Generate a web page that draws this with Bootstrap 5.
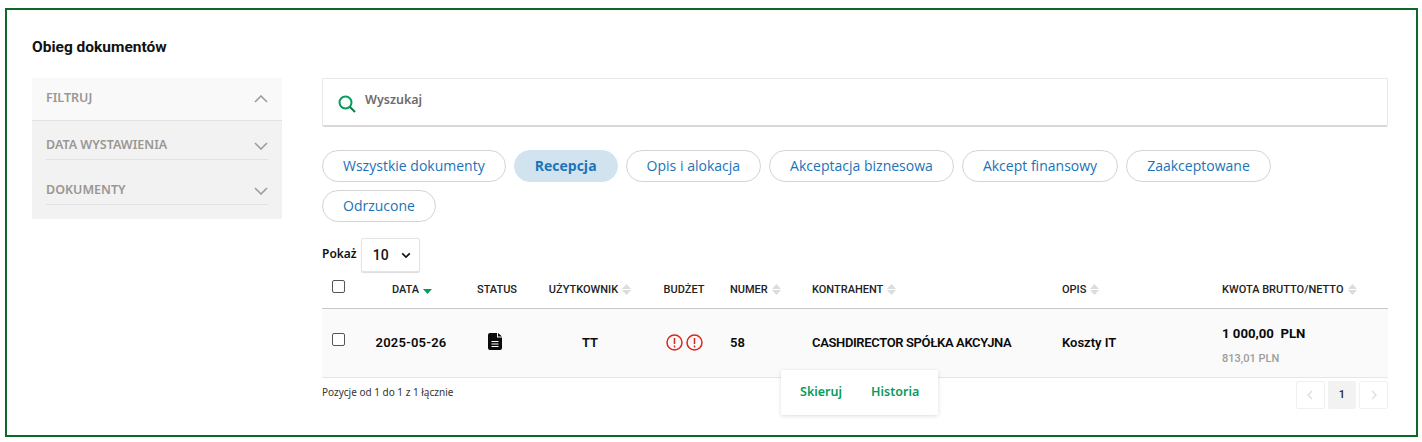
<!DOCTYPE html>
<html lang="pl"><head><meta charset="utf-8"><title>Obieg dokumentów</title>
<link href="https://cdn.jsdelivr.net/npm/bootstrap@5.3.0/dist/css/bootstrap.min.css" rel="stylesheet">
<style>
html,body{height:442px;overflow:hidden;background:#fff}
body{font-family:Roboto,"Noto Sans",sans-serif;color:#111}
.frame{margin:8px 4px 0 5px;height:429px;border:2px solid #0b6a24;padding:27px 27px 0 25px;position:relative}
.page-title{font:700 15.500px/20px Roboto,sans-serif;margin:0 0 21px;color:#111}
.layout{display:flex;gap:40px}
.side{width:250px;flex:none;height:141px;background:#f2f2f2}
.side-head{height:43px;padding:0 14px 4px;background:#f9f9f9;border-bottom:1px solid #e2e2e2;display:flex;justify-content:space-between;align-items:center}
.side-label{font:600 12.500px/16px "Noto Sans",sans-serif;color:#9a9694;text-transform:uppercase;position:relative;top:1px}
.side-row{margin:0 14px;height:39px;border-bottom:1px solid #e2e2e2;display:flex;justify-content:space-between;align-items:center;padding-top:8px}
.side-row+.side-row{height:45px;padding-top:14px}
.side-row svg{position:relative;top:2px}
.side-head svg{position:relative;top:2px}
.main-col{width:1066px;flex:none}
.search-box{height:49px;border:1px solid #e8e8e8;border-bottom:2px solid #d8d8d8;display:flex;align-items:center;gap:9px;padding:0 15px;border-radius:2px;margin-bottom:23px}
.search-box svg{position:relative;top:2px}
.search-text{font:600 12.500px/16px "Noto Sans",sans-serif;color:#6f6b69;margin-top:-4px}
.pills{display:flex;flex-wrap:wrap;gap:8px;width:1000px;margin-bottom:16px}
.pill{height:32px;border:1px solid #d4d4d4;border-radius:16px;padding:0 20px;font:400 14px/30px "Open Sans",sans-serif;letter-spacing:.009px;color:#1a73b8;text-decoration:none;background:#fff}
.pill.on{background:#d2e3f0;border-color:#d2e3f0;font-weight:700}
.show-row{display:flex;align-items:center;gap:4px;font:600 12px/16px "Noto Sans",sans-serif;height:34px}
.show-row span{position:relative;top:-1px}
.len-sel{width:59px;height:34px;border:1px solid #e4e4e4;border-radius:2px;font:500 14px/20px Roboto,sans-serif;padding:0 11px;color:#111;box-shadow:0 1px 1px #ddd;background-image:url("data:image/svg+xml,%3csvg xmlns='http://www.w3.org/2000/svg' viewBox='0 0 12 8'%3e%3cpath d='M1.500 1.500L6 6l4.500-4.500' fill='none' stroke='%23111' stroke-width='2'/%3e%3c/svg%3e");background-position:right 8px center;background-size:10px 7px}
.doc-table{table-layout:fixed;width:1066px;margin:0;border-collapse:collapse}
.doc-table th{font:500 11px/14px Roboto,sans-serif;text-transform:uppercase;color:#222;height:36px;padding:0 0 0 10px;border-bottom:1px solid #c8c8c8;background:#fff;white-space:nowrap;vertical-align:middle}
.doc-table td{height:69px;padding:0 0 0 10px;font:600 13px/16px Roboto,sans-serif;color:#0a0a0a;background:#fafafa;border-bottom:1px solid #e6e6e6;vertical-align:middle}
.doc-table .mid{text-align:center;padding-left:0}
.doc-table .form-check-input{margin:0;width:13px;height:13px;border-color:#555;border-radius:2px;display:block;position:relative;top:-3px}
.doc-table td.date-cell{letter-spacing:.2px;padding-right:2px}
.doc-table td.firm-cell{letter-spacing:-.36px}
.doc-table td.amount-cell{padding-top:6px}
.doc-icon{position:relative;left:-2px;top:-1px}
.sort{display:inline-block;width:9px;height:11px;vertical-align:-2px;margin-left:4px}
.amount{font-weight:700;font-size:13.200px;line-height:18px;margin-bottom:9px}
.amount-net{font:500 11px/14px Roboto,sans-serif;color:#9c9c9c}
.foot{display:flex;justify-content:space-between;padding-top:3px;position:relative}
.info{font:400 10px/22px "Noto Sans",sans-serif;color:#333}
.pager{display:flex;gap:3px}
.pg{width:28.700px;height:28px;border:1px solid #f0f0f0;border-radius:2px;display:flex;align-items:center;justify-content:center;font:500 11px/14px Roboto,sans-serif;color:#222}
.pg.on{background:#f2f2f2;border-color:#f2f2f2}
.actions{position:absolute;left:459px;top:-8px;width:157px;height:45px;background:#fff;box-shadow:0 1px 4px rgba(0,0,0,.14);display:flex;align-items:center;gap:29px;padding:0 19px;font:600 12.500px/16px "Noto Sans",sans-serif}
.actions a{color:#0a9a5c;text-decoration:none}
</style></head>
<body>
<div class="frame">
<h1 class="page-title">Obieg dokumentów</h1>
<div class="layout">
<aside class="side">
<div class="side-head"><span class="side-label">Filtruj</span><svg width="14" height="8" viewBox="0 0 14 8"><path d="M1 7l6-6 6 6" fill="none" stroke="#a09c9a" stroke-width="1.6"/></svg></div>
<div class="side-row"><span class="side-label">Data wystawienia</span><svg width="14" height="8" viewBox="0 0 14 8"><path d="M1 1l6 6 6-6" fill="none" stroke="#a09c9a" stroke-width="1.6"/></svg></div>
<div class="side-row"><span class="side-label">Dokumenty</span><svg width="14" height="8" viewBox="0 0 14 8"><path d="M1 1l6 6 6-6" fill="none" stroke="#a09c9a" stroke-width="1.6"/></svg></div>
</aside>
<div class="main-col">
<div class="search-box"><svg width="18" height="18" viewBox="0 0 18 18"><circle cx="7.500" cy="7.500" r="6" fill="none" stroke="#0a9a5c" stroke-width="2"/><path d="M12 12l5 5" stroke="#0a7a50" stroke-width="2"/></svg><span class="search-text">Wyszukaj</span></div>
<nav class="pills">
<a class="pill" href="#">Wszystkie dokumenty</a><a class="pill on" href="#">Recepcja</a><a class="pill" href="#">Opis i alokacja</a><a class="pill" href="#">Akceptacja biznesowa</a><a class="pill" href="#">Akcept finansowy</a><a class="pill" href="#">Zaakceptowane</a><a class="pill" href="#">Odrzucone</a>
</nav>
<div class="show-row"><span>Pokaż</span><select class="form-select len-sel"><option>10</option></select></div>
<table class="table doc-table">
<colgroup><col style="width:40px"><col style="width:100px"><col style="width:70px"><col style="width:116px"><col style="width:72px"><col style="width:82px"><col style="width:250px"><col style="width:160px"><col style="width:176px"></colgroup>
<thead><tr>
<th><input class="form-check-input" type="checkbox" aria-label="Zaznacz"></th>
<th class="mid">Data<svg class="sort" viewBox="0 0 9 11"><path d="M0 5h9L4.500 10z" fill="#0a9a5c"/></svg></th>
<th class="mid">Status</th>
<th class="mid">Użytkownik<svg class="sort" viewBox="0 0 9 11"><path d="M0 5h9L4.500 0zM0 6h9l-4.500 5z" fill="#dcdcdc"/></svg></th>
<th class="mid">Budżet</th>
<th>Numer<svg class="sort" viewBox="0 0 9 11"><path d="M0 5h9L4.500 0zM0 6h9l-4.500 5z" fill="#dcdcdc"/></svg></th>
<th>Kontrahent<svg class="sort" viewBox="0 0 9 11"><path d="M0 5h9L4.500 0zM0 6h9l-4.500 5z" fill="#dcdcdc"/></svg></th>
<th>Opis<svg class="sort" viewBox="0 0 9 11"><path d="M0 5h9L4.500 0zM0 6h9l-4.500 5z" fill="#dcdcdc"/></svg></th>
<th>Kwota brutto/netto<svg class="sort" viewBox="0 0 9 11"><path d="M0 5h9L4.500 0zM0 6h9l-4.500 5z" fill="#dcdcdc"/></svg></th>
</tr></thead>
<tbody><tr>
<td><input class="form-check-input" type="checkbox" aria-label="Zaznacz wiersz"></td>
<td class="mid date-cell">2025-05-26</td>
<td class="mid"><svg class="doc-icon" width="14" height="17" viewBox="0 0 14 17"><path d="M2 0h7v4.500h5V15a2 2 0 0 1-2 2H2a2 2 0 0 1-2-2V2a2 2 0 0 1 2-2zM10 0l4 3.500h-4z" fill="#0a0a0a"/><path d="M3.500 8.500h7M3.500 11h7M3.500 13.500h7" stroke="#fff"/></svg></td>
<td class="mid">TT</td>
<td class="mid"><svg width="37" height="17" viewBox="0 0 37 17"><g fill="none" stroke="#d9281e" stroke-width="1.500"><circle cx="8.500" cy="8.500" r="7.500"/><circle cx="28.500" cy="8.500" r="7.500"/><path d="M8.500 4v6M8.500 11.500v2M28.500 4v6M28.500 11.500v2"/></g></svg></td>
<td>58</td>
<td class="firm-cell">CASHDIRECTOR SPÓŁKA AKCYJNA</td>
<td>Koszty IT</td>
<td class="amount-cell"><div class="amount">1 000,00&nbsp; PLN</div><div class="amount-net">813,01 PLN</div></td>
</tr></tbody></table>
<div class="foot">
<span class="info">Pozycje od 1 do 1 z 1 łącznie</span>
<div class="actions"><a href="#">Skieruj</a><a href="#">Historia</a></div>
<div class="pager"><span class="pg"><svg width="6" height="10" viewBox="0 0 6 10"><path d="M5 1L1 5l4 4" fill="none" stroke="#ddd" stroke-width="1.300"/></svg></span><span class="pg on">1</span><span class="pg"><svg width="6" height="10" viewBox="0 0 6 10"><path d="M1 1l4 4-4 4" fill="none" stroke="#ddd" stroke-width="1.300"/></svg></span></div>
</div>
</div>
</div>
</div>
<script src="https://cdn.jsdelivr.net/npm/bootstrap@5.3.0/dist/js/bootstrap.bundle.min.js"></script>
</body></html>
